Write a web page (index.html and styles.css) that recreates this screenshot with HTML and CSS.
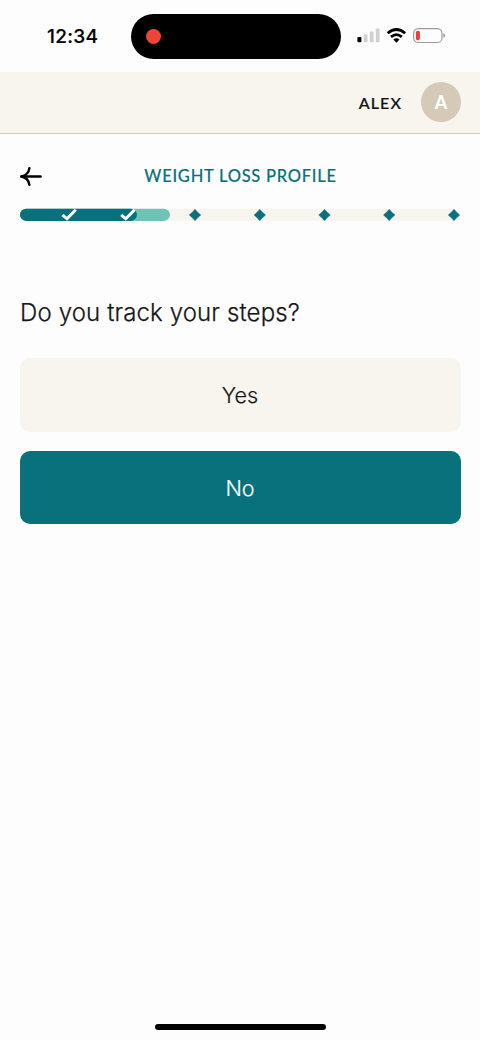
FILE: index.html
```html
<!DOCTYPE html>
<html lang="en">
<head>
<meta charset="utf-8">
<meta name="viewport" content="width=device-width">
<title>Weight Loss Profile</title>
<link rel="stylesheet" href="styles.css">
</head>
<body>
<div class="screen">
  <div class="status">
    <span class="time">12:34</span>
    <div class="island"><span class="rec"></span></div>
    <svg class="indicators" width="90" height="18" viewBox="0 0 90 18">
      <rect x="0.4" y="10" width="4" height="5.3" rx="1" fill="#000"/>
      <g fill="#d0cfd1"><rect x="6.7" y="7.2" width="3.8" height="8.1" rx="1"/><rect x="12.8" y="4.4" width="3.8" height="10.9" rx="1"/><rect x="18.8" y="1.4" width="3.8" height="13.9" rx="1"/></g>
      <g fill="none" stroke="#000" stroke-width="2.8"><path d="M30.7 6.3Q39.4 -1.3 48.1 6.3"/><path d="M34 9.9Q39.4 5.3 44.8 9.9"/></g>
      <path d="M36.3 12.4Q39.4 9.9 42.5 12.4L39.4 15.7Z"/>
      <rect x="56.6" y="1.6" width="28.4" height="13.9" rx="4.6" fill="none" stroke="#9c9b9d" stroke-width="1.2"/>
      <rect x="58.9" y="3.8" width="4" height="9.4" rx="1.7" fill="#f43d32"/>
      <path d="M86.3 6.2Q88.2 6.8 88.2 8.5T86.3 10.8Z" fill="#9c9b9d"/>
    </svg>
  </div>
  <header class="account">
    <span class="name">ALEX</span>
    <span class="avatar">A</span>
  </header>
  <main>
    <div class="heading">
      <svg class="back" width="24" height="22" viewBox="0 0 24 22" fill="none" stroke="#000" stroke-width="2.4" stroke-linecap="round" stroke-linejoin="round"><path d="M1.4 10.5H20.6"/><path d="M9.4 2.2C8.8 6.4 6 9.6 1.4 10.5C6 11.4 8.8 14.6 9.4 18.8"/></svg>
      <h1>WEIGHT LOSS PROFILE</h1>
    </div>
    <svg class="progress" width="441" height="14" viewBox="0 0 441 14">
      <defs>
        <path id="step" d="M0 -5.8Q2.6 -2.6 5.8 0Q2.6 2.6 0 5.8Q-2.6 2.6 -5.8 0Q-2.6 -2.6 0 -5.8Z"/>
        <path id="check" d="M-6.6 .4L-2 4.3L6.8 -4.8"/>
      </defs>
      <path d="M140 .7H434.5V12.7H140Z" fill="#f7f5ee"/>
      <rect x="0" y=".7" width="150" height="12.2" rx="6.1" fill="#70c2b5"/>
      <rect x="0" y=".7" width="117" height="12.2" rx="6.1" fill="#09717b"/>
      <g fill="#09717b" stroke="#09717b" stroke-width=".4" stroke-linejoin="round"><use href="#step" x="175" y="7"/><use href="#step" x="239.8" y="7"/><use href="#step" x="304.5" y="7"/><use href="#step" x="369.2" y="7"/><use href="#step" x="434" y="7"/></g>
      <g fill="none" stroke="#fff" stroke-width="3"><use href="#check" x="49" y="6.5"/><use href="#check" x="107.8" y="6.5"/></g>
    </svg>
    <h2>Do you track your steps?</h2>
    <div class="answers">
      <button class="answer" type="button">Yes</button>
      <button class="answer selected" type="button">No</button>
    </div>
  </main>
  <div class="home"></div>
</div>
</body>
</html>
```
FILE: styles.css
```css
* { box-sizing: border-box; }
body { margin: 0; background: #fefdfe; color: #171616; font-family: Inter, sans-serif; }
.screen { width: 480px; height: 1040px; display: flex; flex-direction: column; overflow: hidden; }
.status { height: 72px; display: flex; align-items: center; padding-left: 47px; }
.time { width: 84px; padding-top: 1px; font-size: 19px; font-weight: 500; line-height: 24px; color: #000; letter-spacing: 0.3px; -webkit-text-stroke: 0.2px #000; }
.island { width: 210px; height: 45px; border-radius: 23px; background: #000; display: flex; align-items: center; padding-left: 15px; }
.rec { width: 15px; height: 15px; border-radius: 50%; background: #ed4538; }
.indicators { margin-left: 16px; }
.account { height: 62px; background: #f7f5ee; border-bottom: 1px solid #d2ceb6; display: flex; align-items: center; justify-content: flex-end; padding: 0 19px 1px 0; gap: 19px; }
.name { padding-top: 1px; font: 500 16px/20px Lato, sans-serif; letter-spacing: 1.1px; color: #111; -webkit-text-stroke: 0.2px #111; }
.avatar { width: 40px; height: 40px; border-radius: 50%; background: #d5c9b8; color: #fff; font: 700 18px/40px Lato, sans-serif; text-align: center; }
main { padding: 29px 19px 0 20px; }
.heading { height: 26px; display: grid; grid-template-columns: 24px 1fr 24px; align-items: center; }
.back { margin-top: 2px; }
h1 { margin: 0; font: 500 16.5px/24px Lato, sans-serif; letter-spacing: 0.74px; color: #09717b; text-align: center; white-space: nowrap; -webkit-text-stroke: 0.15px #09717b; }
.progress { display: block; margin-top: 19px; }
h2 { margin: 75px 0 0; font-size: 24px; font-weight: 300; line-height: 32px; letter-spacing: 0.13px; white-space: nowrap; -webkit-text-stroke: 0.25px #171616; }
.answers { display: grid; gap: 19px; margin-top: 29px; }
.answer { height: 73.5px; padding: 1px 1px 0 0; border: 0; border-radius: 10px; background: #f7f5ee; color: #171616; font: 300 21.6px/30px Inter, sans-serif; -webkit-text-stroke: 0.2px currentColor; }
.selected { background: #09717b; color: #f4fbfb; }
.home { width: 171px; height: 6px; border-radius: 3px; background: #000; margin: auto auto 10px; }
```
